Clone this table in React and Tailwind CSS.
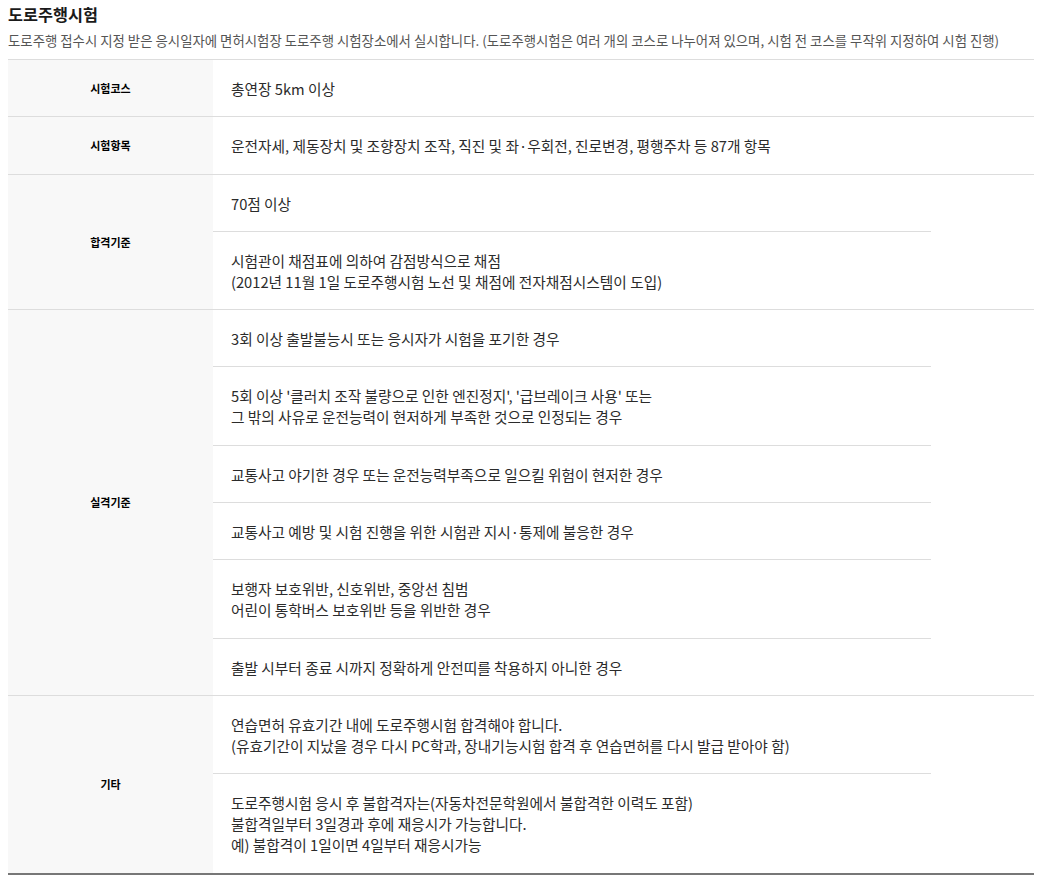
const font = { fontFamily: '"Noto Sans CJK KR", "Noto Sans", sans-serif' };

const rows = [
  { label: "시험코스", items: [["총연장 5km 이상"]] },
  {
    label: "시험항목",
    items: [["운전자세, 제동장치 및 조향장치 조작, 직진 및 좌·우회전, 진로변경, 평행주차 등 87개 항목"]],
  },
  {
    label: "합격기준",
    items: [
      ["70점 이상"],
      ["시험관이 채점표에 의하여 감점방식으로 채점", "(2012년 11월 1일 도로주행시험 노선 및 채점에 전자채점시스템이 도입)"],
    ],
  },
  {
    label: "실격기준",
    items: [
      ["3회 이상 출발불능시 또는 응시자가 시험을 포기한 경우"],
      [
        "5회 이상 '클러치 조작 불량으로 인한 엔진정지', '급브레이크 사용' 또는",
        "그 밖의 사유로 운전능력이 현저하게 부족한 것으로 인정되는 경우",
      ],
      ["교통사고 야기한 경우 또는 운전능력부족으로 일으킬 위험이 현저한 경우"],
      ["교통사고 예방 및 시험 진행을 위한 시험관 지시·통제에 불응한 경우"],
      ["보행자 보호위반, 신호위반, 중앙선 침범", "어린이 통학버스 보호위반 등을 위반한 경우"],
      ["출발 시부터 종료 시까지 정확하게 안전띠를 착용하지 아니한 경우"],
    ],
  },
  {
    label: "기타",
    items: [
      [
        "연습면허 유효기간 내에 도로주행시험 합격해야 합니다.",
        "(유효기간이 지났을 경우 다시 PC학과, 장내기능시험 합격 후 연습면허를 다시 발급 받아야 함)",
      ],
      [
        "도로주행시험 응시 후 불합격자는(자동차전문학원에서 불합격한 이력도 포함)",
        "불합격일부터 3일경과 후에 재응시가 가능합니다.",
        "예) 불합격이 1일이면 4일부터 재응시가능",
      ],
    ],
  },
];

export default function App() {
  return (
    <div className="min-h-screen bg-white px-2" style={font}>
      <h2 className="pt-[1px] text-[16.3px] font-bold leading-[26px] text-[#1a1a1a]">도로주행시험</h2>
      <p className="mt-[2px] whitespace-nowrap text-[13.4px] leading-[22px] text-[#555]">
        도로주행 접수시 지정 받은 응시일자에 면허시험장 도로주행 시험장소에서 실시합니다. (도로주행시험은 여러 개의 코스로 나누어져 있으며, 시험 전 코스를 무작위 지정하여 시험 진행)
      </p>
      <div className="mt-[8px] w-[1026px] border-t border-b-2 border-t-[#dddddd] border-b-[#777777]">
        {rows.map((row, i) => (
          <div
            key={row.label}
            className={`flex ${i < rows.length - 1 ? "border-b border-[#dddddd]" : ""}`}
          >
            <div className="flex w-[205px] shrink-0 items-center justify-center bg-[#f8f8f8] text-[11px] font-bold text-black">
              {row.label}
            </div>
            <div className="flex-1">
              {row.items.map((lines, j) => (
                <div
                  key={j}
                  className={`w-[718px] px-[18px] pt-[18px] pb-[17.3px] text-[14.7px] leading-[21px] text-[#2b2b2b] ${
                    j < row.items.length - 1 ? "border-b border-[#dddddd]" : ""
                  }`}
                >
                  {lines.map((l) => (
                    <div key={l} className="whitespace-nowrap">{l}</div>
                  ))}
                </div>
              ))}
            </div>
          </div>
        ))}
      </div>
    </div>
  );
}
